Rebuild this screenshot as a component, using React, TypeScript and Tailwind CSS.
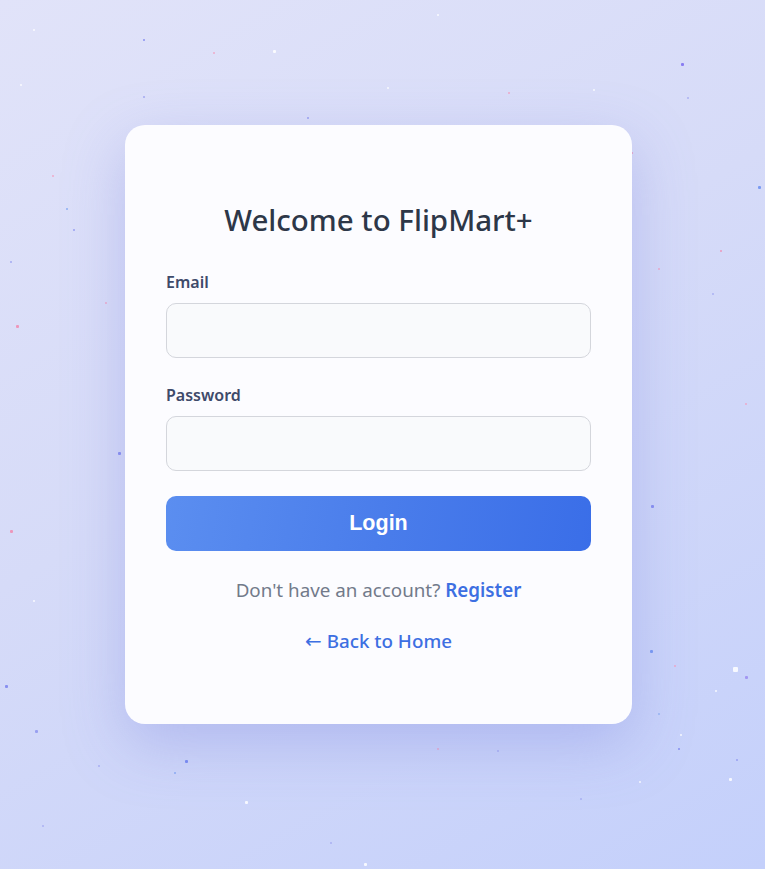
import { useState } from 'react';

interface Particle {
  x: number;
  y: number;
  size: number;
  color: string;
}

const particles: Particle[] = [
  { x: 33, y: 29, size: 2, color: '#ffffff' },
  { x: 143, y: 39, size: 2, color: '#7b83ef' },
  { x: 213, y: 52, size: 2, color: '#f0a0c0' },
  { x: 273, y: 50, size: 3, color: '#ffffff' },
  { x: 20, y: 84, size: 2, color: '#ffffff' },
  { x: 143, y: 96, size: 2, color: '#9aa0ef' },
  { x: 307, y: 117, size: 2, color: '#8f96ee' },
  { x: 437, y: 14, size: 2, color: '#ffffff' },
  { x: 387, y: 87, size: 2, color: '#ffffff' },
  { x: 508, y: 92, size: 2, color: '#f0a0c0' },
  { x: 593, y: 89, size: 2, color: '#ffffff' },
  { x: 681, y: 63, size: 3, color: '#7b6cf0' },
  { x: 687, y: 97, size: 2, color: '#a3a9f0' },
  { x: 52, y: 175, size: 2, color: '#f0a0c0' },
  { x: 66, y: 208, size: 2, color: '#7ea4f2' },
  { x: 73, y: 229, size: 2, color: '#8f96ee' },
  { x: 10, y: 261, size: 2, color: '#9aa0ef' },
  { x: 16, y: 325, size: 3, color: '#f08bb0' },
  { x: 105, y: 302, size: 2, color: '#f0a0c0' },
  { x: 118, y: 452, size: 3, color: '#7b83ef' },
  { x: 10, y: 530, size: 3, color: '#f08bb0' },
  { x: 33, y: 600, size: 2, color: '#ffffff' },
  { x: 5, y: 685, size: 3, color: '#7b83ef' },
  { x: 35, y: 730, size: 3, color: '#8f96ee' },
  { x: 98, y: 765, size: 2, color: '#a3a9f0' },
  { x: 185, y: 760, size: 3, color: '#6b7ff0' },
  { x: 174, y: 772, size: 2, color: '#7ea4f2' },
  { x: 245, y: 801, size: 3, color: '#ffffff' },
  { x: 364, y: 863, size: 3, color: '#ffffff' },
  { x: 42, y: 825, size: 2, color: '#a3a9f0' },
  { x: 631, y: 152, size: 2, color: '#f08bb0' },
  { x: 758, y: 186, size: 3, color: '#6b8ff0' },
  { x: 720, y: 250, size: 2, color: '#f08bb0' },
  { x: 658, y: 268, size: 2, color: '#f0a0c0' },
  { x: 745, y: 403, size: 2, color: '#f0a0c0' },
  { x: 712, y: 293, size: 2, color: '#a3a9f0' },
  { x: 651, y: 505, size: 3, color: '#7b83ef' },
  { x: 650, y: 650, size: 3, color: '#6b8ff0' },
  { x: 674, y: 665, size: 2, color: '#f0a0c0' },
  { x: 733, y: 667, size: 5, color: '#ffffff' },
  { x: 745, y: 676, size: 3, color: '#9b8cf0' },
  { x: 715, y: 690, size: 2, color: '#ffffff' },
  { x: 658, y: 713, size: 2, color: '#8fb0f2' },
  { x: 680, y: 734, size: 2, color: '#ffffff' },
  { x: 678, y: 748, size: 2, color: '#7b83ef' },
  { x: 736, y: 759, size: 2, color: '#8f96ee' },
  { x: 729, y: 778, size: 3, color: '#ffffff' },
  { x: 639, y: 781, size: 2, color: '#ffffff' },
  { x: 580, y: 798, size: 2, color: '#a3a9f0' },
  { x: 497, y: 750, size: 2, color: '#a3a9f0' },
  { x: 437, y: 748, size: 2, color: '#f0a0c0' },
  { x: 330, y: 842, size: 2, color: '#a3a9f0' },
];

export default function App() {
  const [email, setEmail] = useState('');
  const [password, setPassword] = useState('');

  return (
    <div className="relative min-h-[869px] w-full overflow-hidden bg-[linear-gradient(150deg,#e1e3f9_0%,#d6dbf8_45%,#c4d0fb_100%)] flex items-start justify-center pt-[125px] pr-[8px]">
      {/* Particles */}
      {particles.map((p, i) => (
        <span
          key={i}
          className="absolute rounded-[1px]"
          style={{ left: p.x, top: p.y, width: p.size, height: p.size, backgroundColor: p.color, opacity: 0.85 }}
        />
      ))}

      {/* Card */}
      <div
        className="relative w-[507px] h-[599px] rounded-[20px] bg-[#fcfcff] shadow-[0_20px_60px_rgba(120,130,220,0.35)] px-[41px] pt-[78px]"
        style={{ fontFamily: '"Noto Sans", "Open Sans", sans-serif' }}
      >
        <h2 className="text-center text-[29.5px] leading-[34px] font-medium text-[#2d3748]">
          Welcome to FlipMart+
        </h2>

        <div className="mt-[33px]">
          <label className="block text-[16px] leading-[24px] font-semibold text-[#3e4a6a]">Email</label>
          <input
            type="email"
            value={email}
            onChange={(e) => setEmail(e.target.value)}
            className="mt-[9px] block w-full h-[55px] rounded-[10px] border border-[#d4d6dc] bg-[#f9fafc] px-4 outline-none"
          />
        </div>

        <div className="mt-[25px]">
          <label className="block text-[16px] leading-[24px] font-semibold text-[#3e4a6a]">Password</label>
          <input
            type="password"
            value={password}
            onChange={(e) => setPassword(e.target.value)}
            className="mt-[9px] block w-full h-[55px] rounded-[10px] border border-[#d4d6dc] bg-[#f9fafc] px-4 outline-none"
          />
        </div>

        <button
          className="mt-[25px] block w-full h-[55px] rounded-[10px] bg-[linear-gradient(100deg,#5b8ef0_0%,#4a7deb_50%,#3a6ee8_100%)] text-white text-[21.5px] font-bold"
          style={{ fontFamily: '"Liberation Sans", Arial, sans-serif' }}
        >
          Login
        </button>

        <p className="mt-[26px] text-center text-[18.8px] leading-[27px] text-[#727a8a]">
          Don't have an account?{' '}
          <a className="font-semibold text-[#3d6fe2] cursor-pointer">Register</a>
        </p>

        <p className="mt-[24px] text-center text-[18.8px] leading-[27px]">
          <a className="font-medium text-[#3d6fe2] cursor-pointer">
            <span className="text-[20px] font-normal" style={{ fontFamily: '"DejaVu Sans", sans-serif' }}>←</span> Back to Home
          </a>
        </p>
      </div>
    </div>
  );
}
